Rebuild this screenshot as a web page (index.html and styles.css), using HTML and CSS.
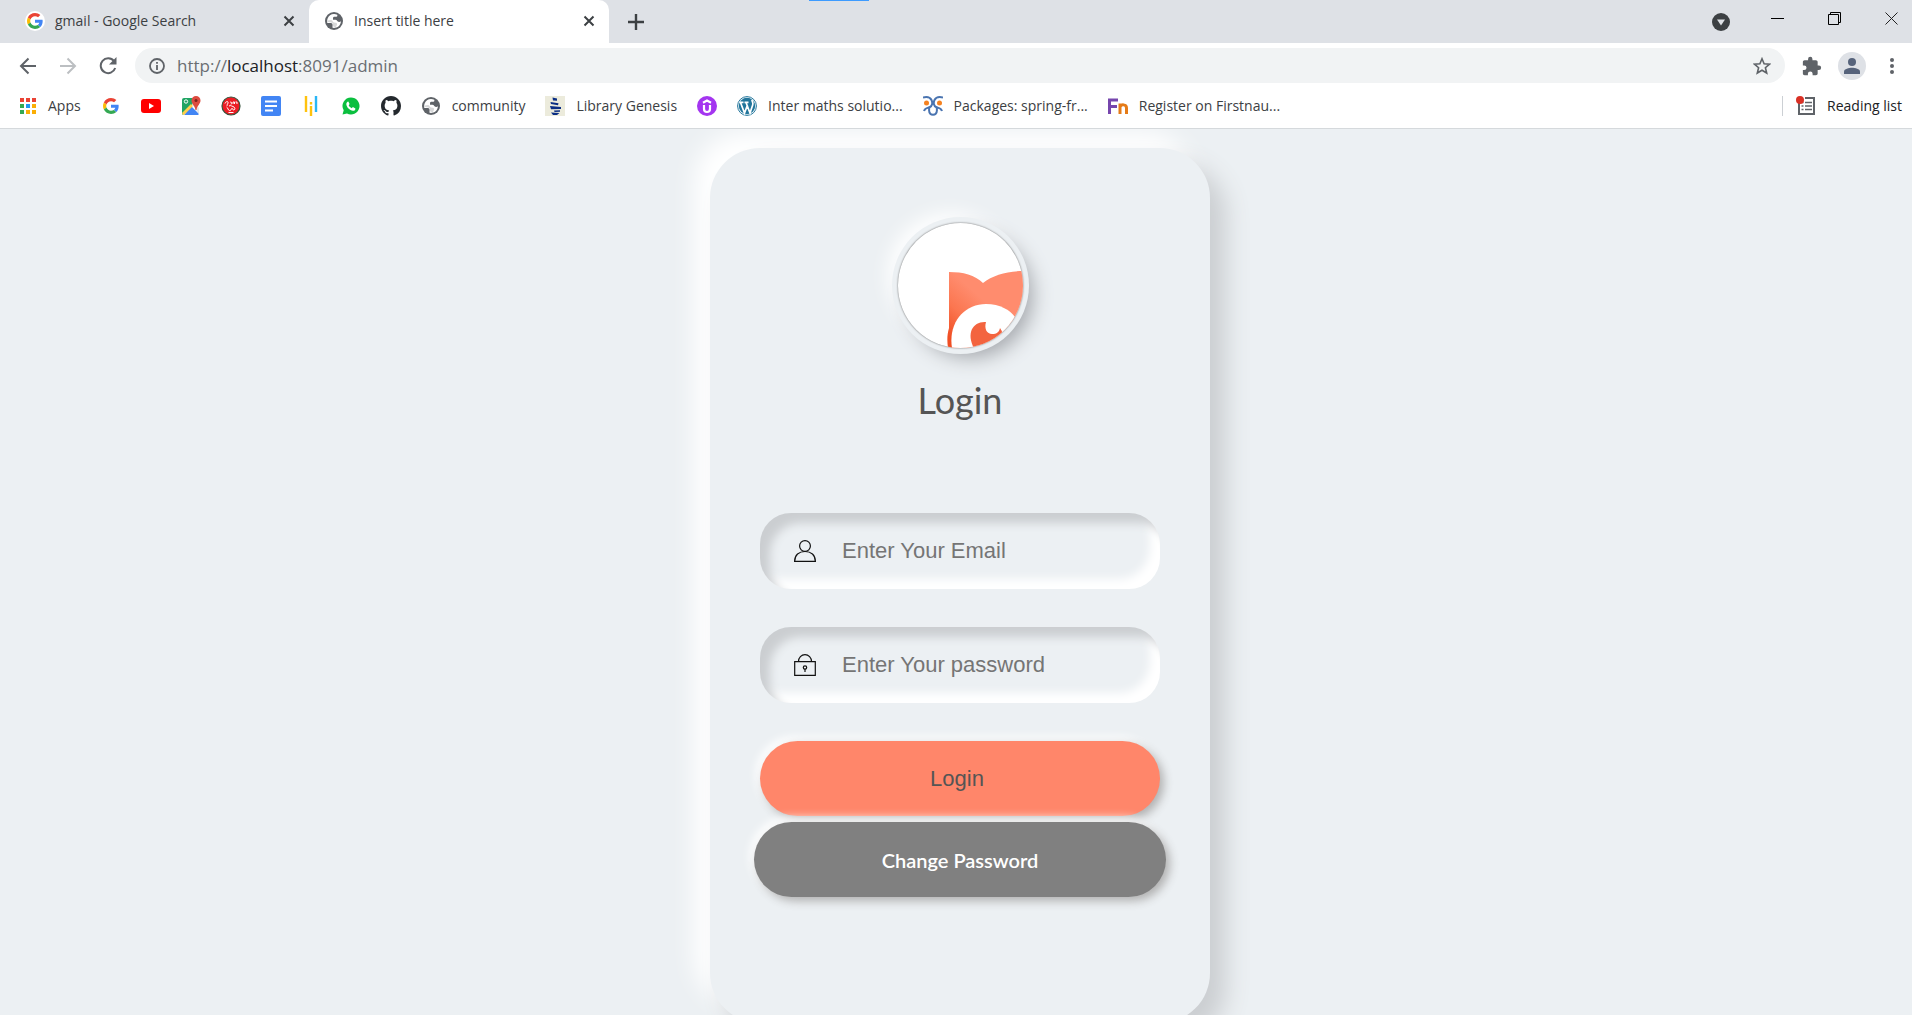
FILE: index.html
```
<!DOCTYPE html>
<html lang="en">
<head>
<meta charset="utf-8">
<title>Insert title here</title>
<link rel="stylesheet" href="styles.css">
</head>
<body>
<svg class="defs" aria-hidden="true">
  <symbol id="google" viewBox="0 0 48 48">
    <path fill="#ea4335" d="M24 9.5c3.54 0 6.71 1.22 9.21 3.6l6.85-6.85C35.9 2.38 30.47 0 24 0 14.62 0 6.51 5.38 2.56 13.22l7.98 6.19C12.43 13.72 17.74 9.5 24 9.5z"/>
    <path fill="#4285f4" d="M46.98 24.55c0-1.57-.15-3.09-.38-4.55H24v9.02h12.94c-.58 2.96-2.26 5.48-4.78 7.18l7.73 6c4.51-4.18 7.09-10.36 7.09-17.65z"/>
    <path fill="#fbbc05" d="M10.53 28.59c-.48-1.45-.76-2.99-.76-4.59s.27-3.14.76-4.59l-7.98-6.19C.92 16.46 0 20.12 0 24c0 3.88.92 7.54 2.56 10.78l7.97-6.19z"/>
    <path fill="#34a853" d="M24 48c6.48 0 11.93-2.13 15.89-5.81l-7.73-6c-2.15 1.45-4.92 2.3-8.16 2.3-6.26 0-11.57-4.22-13.47-9.91l-7.98 6.19C6.51 42.62 14.62 48 24 48z"/>
  </symbol>
  <symbol id="globe" viewBox="0 0 20 20">
    <circle cx="10" cy="10" r="9" fill="#5f6368"/>
    <path fill="#fff" d="M10 3c-3 0-5.500 2-6.500 4.800C3 9.500 3 10.500 3.300 12l3 .1c1.400 0 2.200.6 2.200 1.800v2.900c4.200.7 8.300-2 8.400-6.600-1 .9-2.500.9-3.400 0-.6-.7-.8-1.500-2-1.500H9V7.200c0-.9.800-1.400 1.800-1.400h1.700c.8 0 1-.8.8-2C12.300 3.200 11.200 3 10 3z"/>
    <path fill="#5f6368" d="M3.500 9.500 7 9c1.500 0 1.500 2 3 2.500 1.500.4 2.500 0 3 1.200.4 1-.5 2.300-1.500 3.800L8.500 15v-2.500C8 11 5 11.500 3.500 11z" opacity=".25"/>
  </symbol>
  <symbol id="close" viewBox="0 0 12 12"><path d="m1.500 1.500 9 9m0-9-9 9" stroke="#3c4043" stroke-width="2" fill="none"/></symbol>
</svg>

<header class="browser">
  <div class="tabstrip">
    <div class="tab tab-idle">
      <span class="favicon-disc"><svg width="16" height="16"><use href="#google"/></svg></span>
      <span class="tab-title">gmail - Google Search</span>
      <button class="icon-btn" aria-label="Close tab"><svg width="12" height="12"><use href="#close"/></svg></button>
    </div>
    <div class="tab tab-active">
      <svg width="20" height="20"><use href="#globe"/></svg>
      <span class="tab-title">Insert title here</span>
      <button class="icon-btn" aria-label="Close tab"><svg width="12" height="12"><use href="#close"/></svg></button>
    </div>
    <button class="icon-btn new-tab" aria-label="New tab"><svg width="16" height="16" viewBox="0 0 16 16"><path d="M8 0v16M0 8h16" stroke="#3c4043" stroke-width="2.400"/></svg></button>
    <span class="loading-bar"></span>
    <div class="window-controls">
      <button class="icon-btn search-tabs" aria-label="Search tabs"><svg width="18" height="18" viewBox="0 0 18 18"><circle cx="9" cy="9" r="9" fill="#3c4043"/><path d="M5 6.500h8L9 12.500z" fill="#dee1e6"/></svg></button>
      <button class="icon-btn" aria-label="Minimize"><svg width="13" height="13" viewBox="0 0 13 13"><path d="M0 6.500h13" stroke="#000"/></svg></button>
      <button class="icon-btn" aria-label="Restore"><svg width="13" height="13" viewBox="0 0 13 13"><path d="M.5 2.500h10v10H.5zM2.500 2.500v-2h10v10h-2" stroke="#000" fill="none"/></svg></button>
      <button class="icon-btn" aria-label="Close window"><svg width="13" height="13" viewBox="0 0 13 13"><path d="m.5.5 12 12m0-12-12 12" stroke="#222" fill="none"/></svg></button>
    </div>
  </div>

  <div class="toolbar">
    <button class="icon-btn" aria-label="Back"><svg width="18" height="18" viewBox="0 0 18 18"><path d="M17 9H2m7.500-7.500L2 9l7.500 7.500" stroke="#5f6368" stroke-width="2" fill="none"/></svg></button>
    <button class="icon-btn" aria-label="Forward"><svg width="18" height="18" viewBox="0 0 18 18"><path d="M1 9h15M8.500 1.500 16 9l-7.500 7.500" stroke="#bcbfc2" stroke-width="2" fill="none"/></svg></button>
    <button class="icon-btn" aria-label="Reload"><svg width="18" height="18" viewBox="0 0 18 18"><path d="M15 4.200A7.400 7.400 0 1 0 16.200 11" stroke="#5f6368" stroke-width="2" fill="none"/><path d="M17.500 0v7.500H10z" fill="#5f6368"/></svg></button>
    <div class="omnibox">
      <svg width="16" height="16" viewBox="0 0 16 16"><circle cx="8" cy="8" r="7" stroke="#5f6368" stroke-width="1.800" fill="none"/><path d="M8 7v5M8 4v1.800" stroke="#5f6368" stroke-width="1.800"/></svg>
      <span class="url">http://<b>localhost</b>:8091/admin</span>
      <button class="icon-btn" aria-label="Bookmark this tab"><svg width="18" height="18" viewBox="0 0 18 18"><path d="m9 1.800 2.100 5 5.400.4-4.100 3.500 1.300 5.300L9 13.200 4.300 16l1.300-5.300-4.100-3.500 5.400-.4z" stroke="#5f6368" stroke-width="1.600" fill="none"/></svg></button>
    </div>
    <button class="icon-btn" aria-label="Extensions"><svg width="20" height="20" viewBox="1 0 23 23"><path fill="#5f6368" d="M20.500 11H19V7c0-1.100-.9-2-2-2h-4V3.500a2.500 2.500 0 0 0-5 0V5H4c-1.100 0-2 .9-2 2v3.800h1.500a2.700 2.700 0 0 1 0 5.400H2V20c0 1.100.9 2 2 2h3.800v-1.500a2.700 2.700 0 0 1 5.400 0V22H17c1.100 0 2-.9 2-2v-4h1.500a2.500 2.500 0 0 0 0-5z"/></svg></button>
    <button class="icon-btn avatar" aria-label="Profile"><svg width="16" height="16" viewBox="0 0 16 16"><circle cx="8" cy="4" r="4" fill="#56637b"/><path d="M0 16v-2.500C0 11 5 9.800 8 9.800s8 1.200 8 3.700V16z" fill="#56637b"/></svg></button>
    <button class="icon-btn menu" aria-label="Menu"><svg width="4" height="16" viewBox="0 0 4 16"><circle cx="2" cy="2" r="2" fill="#5f6368"/><circle cx="2" cy="8" r="2" fill="#5f6368"/><circle cx="2" cy="14" r="2" fill="#5f6368"/></svg></button>
  </div>

  <nav class="bookmarks" aria-label="Bookmarks">
    <a href="#" class="apps"><svg width="20" height="20" viewBox="0 0 20 20"><path fill="#ea4335" d="M2 2h4v4H2zM8 2h4v4H8zM14 2h4v4h-4z"/><path fill="#34a853" d="M2 8h4v4H2zM2 14h4v4H2z"/><path fill="#2196f3" d="M8 8h4v4H8z"/><path fill="#fbae05" d="M14 8h4v4h-4zM8 14h4v4H8zM14 14h4v4h-4z"/></svg>Apps</a>
    <a href="#" aria-label="Google"><svg width="20" height="20" viewBox="-6 -6 60 60"><use href="#google" width="48" height="48"/></svg></a>
    <a href="#" aria-label="YouTube"><svg width="20" height="20" viewBox="0 0 20 20"><rect y="3" width="20" height="14" rx="3" fill="#f00"/><path fill="#fff" d="M8 7v6l5-3z"/></svg></a>
    <a href="#" aria-label="Maps"><svg width="20" height="20" viewBox="0 0 20 20"><path fill="#1fa463" d="M1 4a2 2 0 0 1 2-2h10l-1 6-10 11-1-1z"/><path fill="#4285f4" d="m10 10 8 8-1 1H3z"/><path fill="#e5e5e5" d="m11 8 2-2 5 6v6z"/><path fill="#ffd04b" d="m1 17 9-9 2 2-9 9H2z"/><circle cx="5" cy="5.500" r="1.700" stroke="#fff" fill="none"/><path fill="#dd4b3e" d="M15 0a4.500 4.500 0 0 1 4.500 4.500c0 3.500-3.500 5-4 9.500h-1c-.5-4.500-4-6-4-9.500A4.500 4.500 0 0 1 15 0z"/><circle cx="15" cy="4.500" r="1.500" fill="#7a231b"/></svg></a>
    <a href="#" aria-label="Red badge"><svg width="20" height="20" viewBox="0 0 20 20"><circle cx="10" cy="10" r="9" fill="#ed1c24" stroke="#35533c" stroke-width="1.200"/><path d="M4 7.500C5 5 7.500 5 7 7S5 9.500 6.500 9.500M9 6.500c1.500-1.500 2 .5 1 2M12 8V6h1.500v2M14.500 6H16v2M5.500 11c2 1 1 3 3 3.500s1-2 2.500-2 .5 2 2 1.500 1-3-1-3.500-2-1.500-4-.5M7.500 16.500h5" stroke="#fff" fill="none"/></svg></a>
    <a href="#" aria-label="Docs"><svg width="20" height="20" viewBox="0 0 20 20"><rect width="20" height="20" rx="2" fill="#4285f4"/><path d="M4 5.500h12M4 10h12M4 14.500h8" stroke="#fff" stroke-width="2"/></svg></a>
    <a href="#" aria-label="Bars"><svg width="20" height="20" viewBox="0 0 20 20"><path d="M5 0v16M10 10v10M10 6v2.500" stroke="#ffc20e" stroke-width="2.400"/><path d="M15 0v16" stroke="#29b6f6" stroke-width="2.400"/></svg></a>
    <a href="#" aria-label="WhatsApp"><svg width="20" height="20" viewBox="0 0 20 20"><path fill="#0abf3f" d="M10 1.500a8.500 8.500 0 1 1-4 16L1.500 18.500l1.200-4.200A8.500 8.500 0 0 1 10 1.500z"/><path fill="#fff" d="M7.300 5.500 8.600 8l-.9 1.300c.6 1.300 1.600 2.200 3 2.900l1.200-1.100 2.500 1.300c.1 1.500-1 2.400-2.400 2.300-3.500-.5-6.200-3.200-6.700-6.500 0-1.400.9-2.500 2-2.700z"/></svg></a>
    <a href="#" aria-label="GitHub"><svg width="20" height="20" viewBox="0 0 16 16"><path fill="#24292e" d="M8 0C3.580 0 0 3.580 0 8c0 3.540 2.290 6.530 5.470 7.590.4.070.55-.17.55-.38 0-.19-.01-.82-.01-1.490-2.010.37-2.530-.49-2.690-.94-.09-.23-.48-.94-.82-1.130-.28-.15-.68-.52-.01-.53.63-.01 1.080.58 1.230.82.72 1.210 1.870.87 2.330.66.070-.52.28-.87.51-1.070-1.780-.2-3.640-.89-3.640-3.950 0-.87.31-1.590.82-2.150-.08-.2-.36-1.020.08-2.120 0 0 .67-.21 2.200.82.64-.18 1.320-.27 2-.27s1.360.09 2 .27c1.530-1.040 2.200-.82 2.200-.82.44 1.100.16 1.920.08 2.120.51.56.82 1.270.82 2.150 0 3.070-1.870 3.750-3.650 3.950.29.25.54.73.54 1.480 0 1.070-.01 1.930-.01 2.200 0 .21.15.46.55.38A8.010 8.010 0 0 0 16 8c0-4.420-3.580-8-8-8z"/></svg></a>
    <a href="#"><svg width="20" height="20"><use href="#globe"/></svg>community</a>
    <a href="#"><svg width="20" height="20" viewBox="0 0 20 20"><path fill="#ecebdc" d="M0 0h20v20H0z"/><path fill="#0b2e83" d="M7.500 1.500 12 2.500v2.300L8 4.500zM5.500 6l8 1.200-.5 2-7-1.200zM5 10l11 1v2l-10 .2zM9 14.500l6-.3v1.600L9.500 16zM6 16.500l8.500.5-2.500 2H8z"/></svg>Library Genesis</a>
    <a href="#" aria-label="Udemy"><svg width="20" height="20" viewBox="0 0 20 20"><circle cx="10" cy="10" r="10" fill="#a435f0"/><path d="M7 9v4a3 3 0 0 0 6 0V9M6 6.700 10 4.500l4 2.200" stroke="#fff" stroke-width="2.200" fill="none"/></svg></a>
    <a href="#"><svg width="20" height="20" viewBox="0 0 20 20"><circle cx="10" cy="10" r="9.400" fill="#fff" stroke="#21759b"/><circle cx="10" cy="10" r="8.200" fill="#21759b"/><path d="m3.500 6.500 4 10.500 3-8M9 6.500l4 10.500 2.700-8c.8-2.500-.7-3-.7-5M2.500 6.300h4M7.500 6.300h4" stroke="#fff" stroke-width="1.700" fill="none"/></svg>Inter maths solutio...</a>
    <a href="#"><svg width="20" height="20" viewBox="0 0 20 20"><path d="M0 1.500C4 .5 7 1 8.500 4s.5 6-1.500 7-5 .5-6 4M20 1.500c-4-1-7-.5-8.500 2.500s-.5 6 1.500 7 5 .5 6 4M6.500 11.500c-1 3.500 0 5.500 1 6.500s4 1 5 0 2-3 1-6.500" stroke="#4a74b0" stroke-width="2" fill="none"/><circle cx="3.500" cy="7" r="2.500" fill="#f58220"/><circle cx="16.500" cy="7" r="2.500" fill="#f58220"/></svg>Packages: spring-fr...</a>
    <a href="#"><svg width="20" height="20" viewBox="0 0 20 20"><path d="M1.500 18V4H10M1.500 10.500H9" stroke="#7646ad" stroke-width="3" fill="none"/><path d="M12 18V7.500M12 11c1-3 6.500-3 6.500 1v6" stroke="#e57b17" stroke-width="3" fill="none"/></svg>Register on Firstnau...</a>
    <a href="#" class="reading-list"><svg width="20" height="20" viewBox="0 0 20 20"><path d="M3 3v15h15V2H9" stroke="#5f6368" stroke-width="2" fill="none"/><path d="M9 6.500h7M9 10h7M9 13.500h7M5.500 6.500h2M5.500 10h2M5.500 13.500h2" stroke="#5f6368" stroke-width="1.600"/><circle cx="4" cy="4" r="4" fill="#d93025"/></svg>Reading list</a>
  </nav>
</header>

<main class="page">
  <form class="card">
    <svg class="logo" viewBox="0 0 125 125" role="img" aria-label="Logo">
      <defs><linearGradient id="coral" gradientUnits="userSpaceOnUse" x1="48" y1="112" x2="82" y2="74"><stop offset="0" stop-color="#f04e23"/><stop offset=".5" stop-color="#fb7650"/><stop offset="1" stop-color="#ff8c6e"/></linearGradient></defs>
      <path fill="url(#coral)" d="M51 49c14 0 26 3 34 11 10-8 24-12 40-12v77H50c-1-7-1-13 1-20z"/>
      <path fill="#fff" d="M54 125c-4-25 12-44 34-44 14 0 24 6 29 13l8 31z"/>
      <path fill="#f3643f" d="M76 125c-8-15-1-27 12-26-2 7 1 12 6 12s7-2 8-6c5 6 2 15 0 20z"/>
    </svg>
    <h1 class="title">Login</h1>
    <label class="field">
      <svg width="22" height="22" viewBox="0 0 22 22"><circle cx="11" cy="6" r="5.400"/><path d="M.6 21.400C.6 15 5 11.500 11 11.500S21.400 15 21.400 21.400z"/></svg>
      <input type="email" placeholder="Enter Your Email" aria-label="Email">
    </label>
    <label class="field">
      <svg width="22" height="22" viewBox="0 0 22 22"><path d="M.7 7.700h20.600v13.600H.7zM4.500 7.500a6.500 6.800 0 0 1 13 0"/><circle cx="11" cy="13.500" r="1.700"/><path d="M11 15v3"/></svg>
      <input type="password" placeholder="Enter Your password" aria-label="Password">
    </label>
    <button type="submit" class="btn btn-login">Login</button>
    <button type="button" class="btn btn-change">Change Password</button>
  </form>
</main>
</body>
</html>
```
FILE: styles.css
```
* { box-sizing: border-box; }

body {
  margin: 0;
  height: 100vh;
  display: flex;
  flex-direction: column;
  overflow: hidden;
  background: #ecf0f3;
  font-family: "Open Sans", sans-serif;
  color: #3c4043;
}

svg { display: block; flex: none; }
.defs { position: absolute; width: 0; height: 0; }

.icon-btn {
  display: flex;
  align-items: center;
  justify-content: center;
  padding: 0;
  border: 0;
  background: none;
}

/* Browser frame */
.browser {
  flex: none;
  background: #fff;
  border-bottom: 1px solid #d5d9dc;
}

.tabstrip {
  display: flex;
  height: 43px;
  background: #dee1e6;
  font-size: 14px;
}

.tab {
  display: flex;
  align-items: center;
  gap: 10px;
  padding: 0 14px 2px 15px;
}
.tab-idle { width: 309px; padding-left: 25px; }
.tab-active { width: 300px; background: #fff; border-radius: 10px 10px 0 0; }
.tab-title { flex: 1; white-space: nowrap; }

.favicon-disc {
  display: grid;
  place-items: center;
  width: 20px;
  height: 20px;
  border-radius: 50%;
  background: #fff;
}

.new-tab { width: 54px; }

.loading-bar {
  width: 60px;
  height: 1px;
  margin-left: 146px;
  background: #3d9bff;
}

/* The close button runs past the window edge, as in a maximised window */
.window-controls {
  display: flex;
  margin: 0 -8px 0 auto;
}
.window-controls .icon-btn { width: 57px; height: 37px; }
.window-controls .search-tabs { height: 43px; }

.toolbar {
  display: flex;
  align-items: center;
  height: 43px;
  margin-top: 1px;
  padding-left: 8px;
}
.toolbar > .icon-btn { width: 40px; height: 40px; }
.toolbar > .avatar {
  width: 28px;
  height: 28px;
  margin: 0 6px;
  border-radius: 50%;
  background: #dee1e6;
}

.omnibox {
  flex: 1;
  display: flex;
  align-items: center;
  gap: 12px;
  height: 35px;
  margin: 0 7px;
  padding: 0 14px;
  border-radius: 18px;
  background: #f1f3f4;
}
.url { flex: 1; font-size: 17px; color: #6a6e72; }
.url b { font-weight: 400; color: #202124; }

.bookmarks {
  display: flex;
  align-items: center;
  gap: 20px;
  height: 41px;
  padding: 0 10px 3px 18px;
}
.bookmarks a {
  display: flex;
  align-items: center;
  gap: 11px;
  font-size: 14px;
  line-height: 20px;
  color: inherit;
  text-decoration: none;
  white-space: nowrap;
}
.bookmarks .apps { gap: 10px; }
.bookmarks .reading-list {
  margin-left: auto;
  padding-left: 13px;
  border-left: 1px solid #ccd0d4;
  color: #202124;
}

/* Login page */
.page {
  flex: 1;
  min-height: 0;
  overflow: hidden;
  padding: 19px 0 0 8px;
}

.card {
  display: flex;
  flex-direction: column;
  align-items: center;
  width: 500px;
  min-height: 875px;
  margin: 0 auto;
  padding: 75px 44px 50px;
  border-radius: 50px;
  background: #ecf0f3;
  box-shadow: 16px 16px 25px #cbced1, -16px -16px 25px #fff;
}

.logo {
  width: 125px;
  height: 125px;
  border-radius: 50%;
  background: #fff;
  box-shadow: 0 0 2px #5f5f5f, 0 0 0 6px #ecf0f3, 10px 10px 19px #a7aaaf, -10px -10px 19px #fff;
}

.title {
  margin: 28px 0 89px;
  font: 400 36px/48px Lato, sans-serif;
  color: #555;
}

.field {
  display: flex;
  align-items: center;
  gap: 26px;
  width: 400px;
  height: 76px;
  margin-bottom: 38px;
  padding: 0 34px;
  border-radius: 31px;
  box-shadow: inset 10px 10px 10px #cbced1, inset -10px -10px 10px #fff;
}
.field svg { fill: none; stroke: #111; stroke-width: 1.200; }
.field input {
  flex: 1;
  min-width: 0;
  padding: 0;
  border: 0;
  outline: 0;
  background: none;
  font: 22px "Liberation Sans", Arial, sans-serif;
}
.field input::placeholder { color: #757575; }

.btn {
  height: 75px;
  border: 0;
  border-radius: 38px;
  box-shadow: 4px 4px 10px #b1b1b1, -4px -4px 10px #fff;
}
.btn-login {
  width: 400px;
  margin-bottom: 6px;
  padding: 0 12px 0 6px;
  background: #ff866a;
  color: #555;
  font: 22px "Liberation Sans", Arial, sans-serif;
}
.btn-change {
  width: 412px;
  background: #808080;
  color: #fff;
  font: 600 20px Lato, sans-serif;
}
```
